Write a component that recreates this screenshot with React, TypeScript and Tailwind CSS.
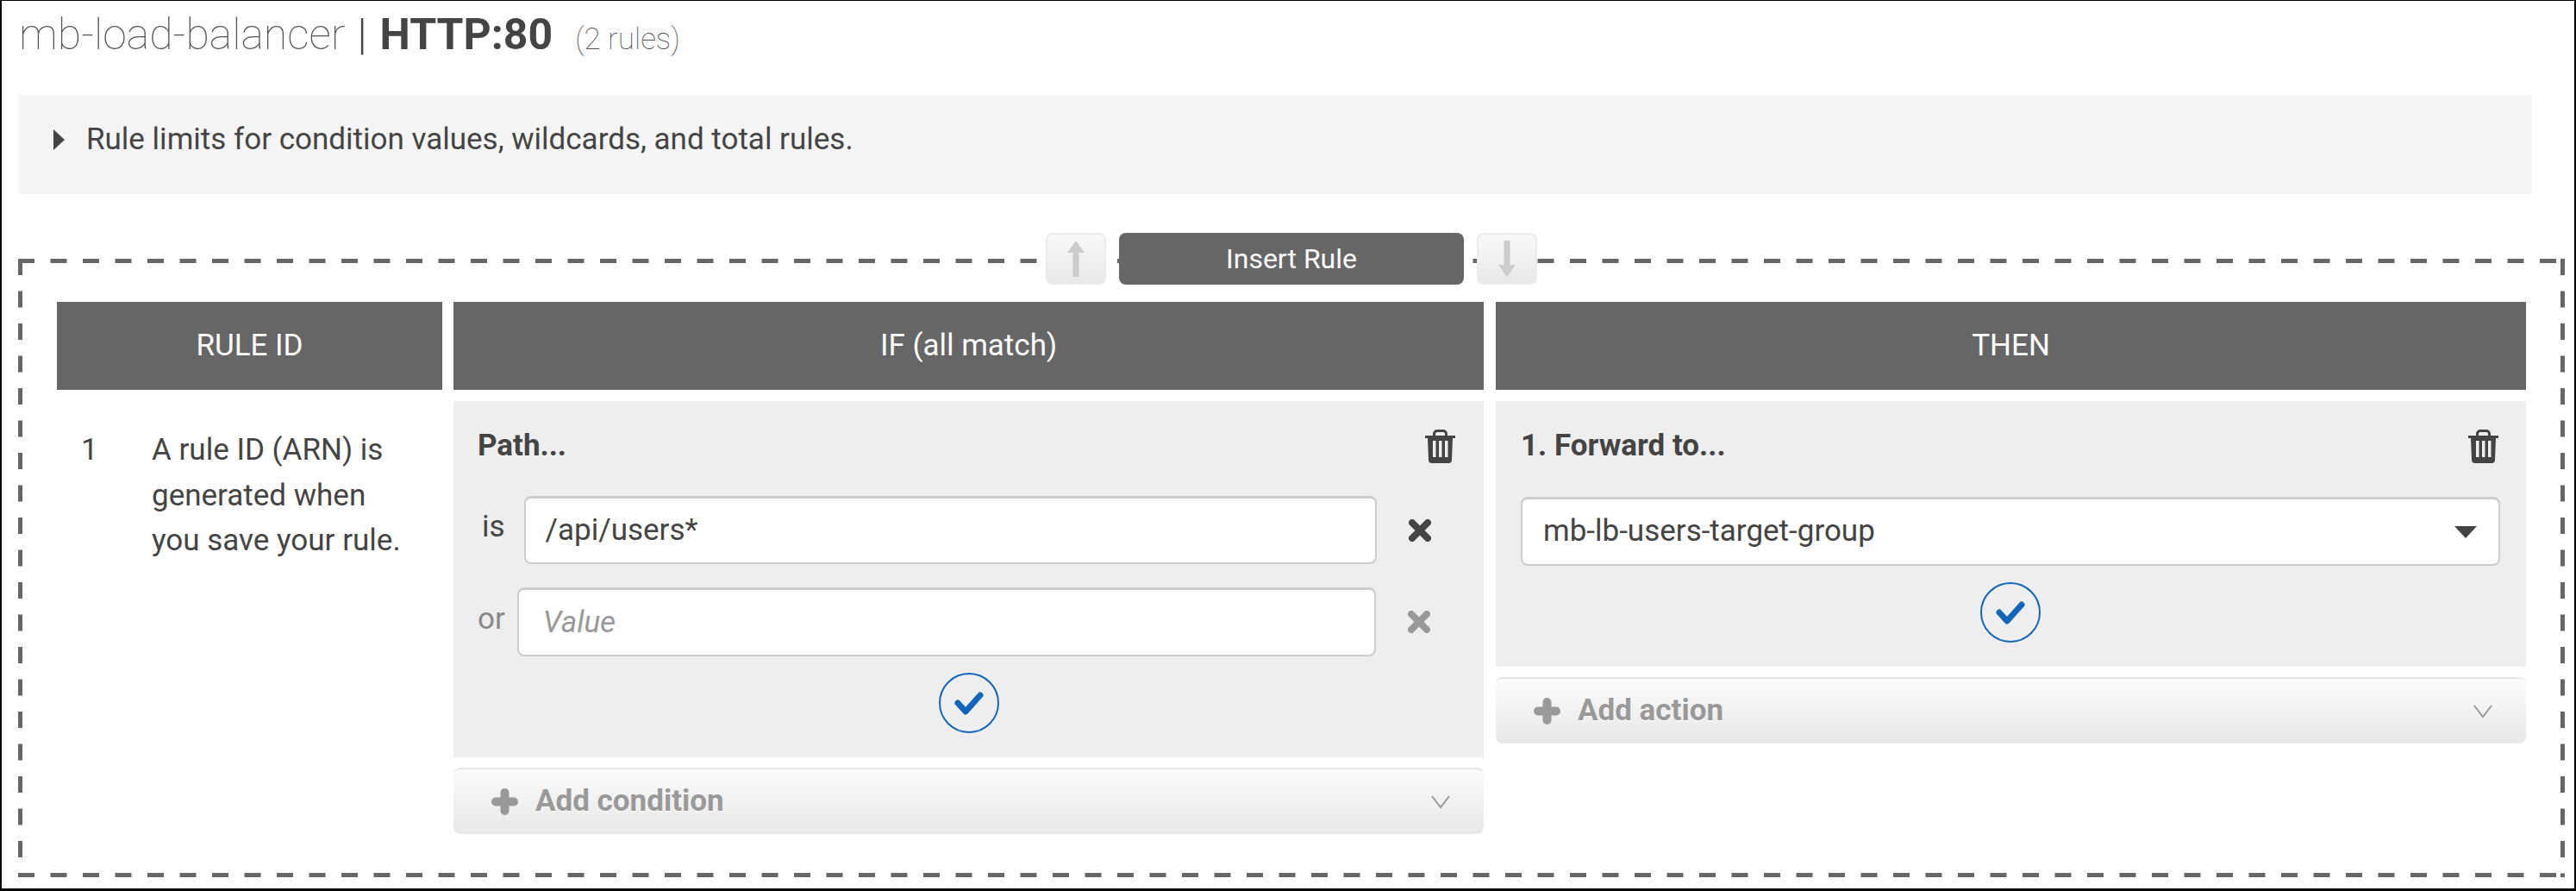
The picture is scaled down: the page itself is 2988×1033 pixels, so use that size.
const Trash = () => (
  <svg width="35" height="39" viewBox="0 0 35 39" fill="#444">
    <path d="M9 7V5a5 5 0 0 1 5-5h7a5 5 0 0 1 5 5v2h-3V5a2 2 0 0 0-2-2h-7a2 2 0 0 0-2 2v2z" />
    <rect x="0" y="7" width="35" height="3" />
    <path fillRule="evenodd" d="M3 10h29l-1 25a4 4 0 0 1-4 4H8a4 4 0 0 1-4-4zm6 3v19h3.5V13zm7 0v19h3.5V13zm7 0v19h3.5V13z" />
  </svg>
);

const CloseIcon = ({ className }: { className: string }) => (
  <svg className={className} width="26" height="26" viewBox="0 0 26 26" fill="none" stroke="currentColor" strokeWidth="8" strokeLinecap="round">
    <path d="M4 4l18 18M22 4L4 22" />
  </svg>
);

const ConfirmCircle = () => (
  <div className="flex h-[70px] w-[70px] items-center justify-center rounded-full border-2 border-[#1166bb]">
    <svg width="34" height="27" viewBox="0 0 34 27" fill="none" stroke="#1166bb" strokeWidth="7" strokeLinecap="round" strokeLinejoin="round">
      <path d="M4 13l9 10L30 4" />
    </svg>
  </div>
);

const AddRow = ({ label, className }: { label: string; className: string }) => (
  <div className={`flex h-[77px] items-center rounded-lg border-t-2 border-[#e6e6e6] bg-gradient-to-b from-[#fbfbfb] to-[#e8e8e8] pr-[38px] ${className}`}>
    <svg className="ml-[44px]" width="31" height="31" viewBox="0 0 31 31" fill="none" stroke="#999" strokeWidth="10" strokeLinecap="round">
      <path d="M15.5 5v21M5 15.5h21" />
    </svg>
    <span className="ml-[20px] text-[35px] font-bold text-[#999] [text-shadow:0_1px_0_#fff]">{label}</span>
    <svg className="ml-auto" width="24" height="16" viewBox="0 0 24 16" fill="none" stroke="#999" strokeWidth="2">
      <path d="M2 1l10 13L22 1" />
    </svg>
  </div>
);

const Header = ({ children }: { children: string }) => (
  <div className="flex h-[102px] items-center justify-center bg-[#666] text-[35px] text-white">{children}</div>
);

const ArrowButton = ({ down }: { down?: boolean }) => (
  <div className="flex h-[60px] w-[70px] items-center justify-center rounded-lg border-2 border-[#ebebeb] bg-gradient-to-b from-[#f9f9f9] to-[#e8e8e8]">
    <svg width="22" height="42" viewBox="0 0 22 42" fill="#ccc">
      <path d={down ? 'M7.5 0h7v28H21L11 42 1 28h6.5z' : 'M11 0l10 14h-6.5v28h-7V14H1z'} />
    </svg>
  </div>
);

export default function App() {
  return (
    <div className="h-[1033px] w-[2988px] overflow-hidden border-x-2 border-t border-b-[3px] border-black bg-white font-['Roboto',sans-serif] text-[#444]">
      <div className="flex h-[109px] items-baseline pl-[20px] pt-[6px] text-[50px] leading-[66px]">
        <span className="font-thin text-[#555]">mb-load-balancer</span>
        <span className="ml-[14px] font-light">|</span>
        <span className="ml-[15px] font-bold">HTTP:80</span>
        <span className="ml-[26px] text-[35px] font-thin text-[#555]">(2 rules)</span>
      </div>

      <div className="ml-[19px] flex h-[115px] w-[2916px] items-center bg-[#f5f5f5] pb-[11px] pl-[41px]">
        <div className="h-0 w-0 border-y-[12px] border-l-[13px] border-y-transparent border-l-[#444]" />
        <span className="ml-[25px] text-[35px]">Rule limits for condition values, wildcards, and total rules.</span>
      </div>

      <div className="relative ml-[19px] mt-[75px] h-[717px] w-[2954px]">
        <svg className="absolute inset-0" width="2954" height="717" fill="none" stroke="#666" strokeWidth="5" strokeDasharray="19 18.5">
          <path d="M0 2.5H2954M2.5 0V717M0 714.5H2954M2951.5 0V717" />
        </svg>

        <div className="relative -top-[30px] flex justify-center gap-[15px]">
          <ArrowButton />
          <div className="flex h-[60px] w-[400px] items-center justify-center rounded-lg bg-[#666] text-[32px] text-white">Insert Rule</div>
          <ArrowButton down />
        </div>

        <div className="relative -mt-[10px] ml-[45px] flex">
          <div className="w-[447px]">
            <Header>RULE ID</Header>
            <div className="flex pl-[28px] pt-[44px] text-[35px] leading-[52.5px]">
              <span className="w-[82px]">1</span>
              <span className="w-[300px]">A rule ID (ARN) is generated when you save your rule.</span>
            </div>
          </div>

          <div className="ml-[13px] w-[1195px]">
            <Header>IF (all match)</Header>
            <div className="mt-[13px] h-[413px] bg-[#eee] pl-[28px] pr-[33px] pt-[32px]">
              <div className="flex h-[40px] items-center justify-between">
                <span className="text-[35px] font-bold">Path...</span>
                <Trash />
              </div>
              <div className="mt-[38px] flex h-[79px] items-center">
                <span className="-mt-[6px] ml-[5px] text-[35px]">is</span>
                <div className="ml-[22px] flex h-full w-[989px] items-center rounded-lg border-2 border-t-[3px] border-[#ccc] bg-white pl-[23px] text-[35px]">/api/users*</div>
                <CloseIcon className="ml-[37px] text-[#444]" />
              </div>
              <div className="mt-[27px] flex h-[80px] items-center">
                <span className="-mt-[6px] text-[35px] text-[#888]">or</span>
                <div className="ml-[14px] flex h-full w-[996px] items-center rounded-lg border-2 border-t-[3px] border-[#ccc] bg-white pl-[28px] pt-[2px] text-[35px] italic text-[#999]">Value</div>
                <CloseIcon className="ml-[37px] text-[#999]" />
              </div>
              <div className="mt-[19px] flex justify-center pl-[6px]">
                <ConfirmCircle />
              </div>
            </div>
            <AddRow label="Add condition" className="mt-[12px]" />
          </div>

          <div className="ml-[14px] w-[1195px]">
            <Header>THEN</Header>
            <div className="mt-[13px] h-[308px] bg-[#eee] pl-[29px] pr-[30px] pt-[32px]">
              <div className="flex h-[40px] items-center justify-between pr-[2px]">
                <span className="text-[35px] font-bold">1. Forward to...</span>
                <Trash />
              </div>
              <div className="mt-[39px] flex h-[80px] items-center justify-between rounded-lg border-2 border-t-[3px] border-[#ccc] bg-white pl-[24px] pr-[25px] text-[35px]">
                mb-lb-users-target-group
                <div className="h-0 w-0 border-x-[13px] border-t-[14px] border-x-transparent border-t-[#444]" />
              </div>
              <div className="mt-[19px] flex justify-center">
                <ConfirmCircle />
              </div>
            </div>
            <AddRow label="Add action" className="mt-[12px]" />
          </div>
        </div>
      </div>
    </div>
  );
}
